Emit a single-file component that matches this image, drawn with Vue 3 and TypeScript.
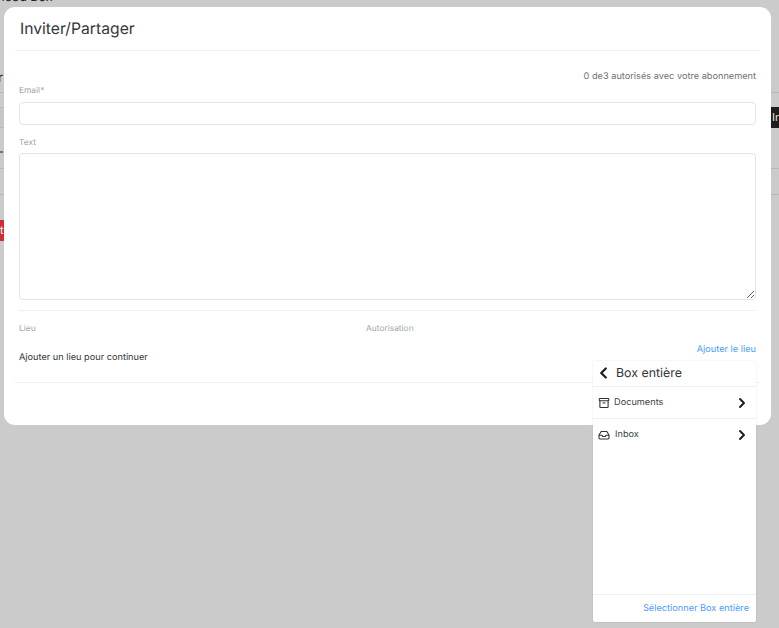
<script setup lang="ts">
const places = [
  { name: 'Documents', icon: 'archive' },
  { name: 'Inbox', icon: 'inbox' },
]
const rowHeights = [6, 14, 19, 40, 25]
</script>

<template>
  <div class="page">
    <div class="behind">
      <div class="behind-title">Advanced Box</div>
      <div class="behind-heading">r</div>
      <div
        v-for="(h, i) in rowHeights"
        :key="i"
        class="behind-row"
        :class="{ band: i === 2 }"
        :style="{ height: h + 'px' }"
      ></div>
      <span class="dot"></span>
      <span class="red">t</span>
      <span class="black">In</span>
    </div>

    <section class="modal">
      <header class="modal-head"><h1>Inviter/Partager</h1></header>
      <div class="modal-body">
        <p class="quota">0 de3 autorisés avec votre abonnement</p>
        <label class="lbl email-lbl">Email*</label>
        <input class="field" type="text" />
        <label class="lbl text-lbl">Text</label>
        <textarea class="area"></textarea>
        <div class="sep"></div>
        <div class="cols">
          <span class="lbl">Lieu</span>
          <span class="lbl">Autorisation</span>
        </div>
        <div class="place-row">
          <span class="hint">Ajouter un lieu pour continuer</span>
          <a class="link add">Ajouter le lieu</a>
        </div>
      </div>
      <div class="foot-line"></div>
    </section>

    <aside class="menu">
      <div class="menu-head">
        <svg width="14" height="14" viewBox="0 0 14 14" fill="none" stroke="#1c1c1c" stroke-width="2.200" stroke-linecap="round" stroke-linejoin="round"><path d="M9.800 2.500 5.200 7l4.600 4.500" /></svg>
        <span>Box entière</span>
      </div>
      <div v-for="(p, i) in places" :key="p.name" class="menu-item" :class="{ last: i === places.length - 1 }">
        <svg v-if="p.icon === 'archive'" class="ico" width="12" height="12" viewBox="0 0 12 12" fill="none" stroke="#333" stroke-width="1.100"><rect x="1.300" y="1.500" width="9.400" height="2.300" rx="0.500" /><path d="M1.900 3.800v6.200a.5.500 0 0 0 .5.500h7.200a.5.500 0 0 0 .5-.5V3.800M4.500 6h3" /></svg>
        <svg v-else class="ico wide" width="12" height="12" viewBox="0 0 12 12" fill="none" stroke="#333" stroke-width="1.100" stroke-linejoin="round"><path d="M3.200 2.500h5.600L11 6v2.800a1.200 1.200 0 0 1-1.200 1.200H2.200A1.200 1.200 0 0 1 1 8.800V6z" /><path d="M1 6.200h3l.6 1.300h2.800L8 6.200h3" /></svg>
        <span class="item-name">{{ p.name }}</span>
        <svg class="chev" width="12" height="12" viewBox="0 0 12 12" fill="none" stroke="#1c1c1c" stroke-width="1.900" stroke-linecap="round" stroke-linejoin="round"><path d="M4 2l4 4-4 4" /></svg>
      </div>
      <div class="menu-space"></div>
      <div class="menu-foot"><a class="link">Sélectionner Box entière</a></div>
    </aside>
  </div>
</template>

<style scoped>
.page {
  position: relative;
  width: 779px;
  height: 628px;
  overflow: hidden;
  background: #cbcbcb;
  font-family: Inter, "Liberation Sans", sans-serif;
  text-rendering: geometricPrecision;
}
.behind {
  display: flex;
  flex-direction: column;
  height: 100%;
  color: #222;
}
.behind-title {
  margin-top: -10px;
  margin-left: -33px;
  height: 16px;
  font-size: 12.500px;
  line-height: 16px;
  white-space: nowrap;
}
.behind-heading {
  margin-top: 64px;
  margin-left: -2px;
  height: 16px;
  font-size: 13px;
  line-height: 16px;
  color: #3a2410;
}
.behind-row { border-bottom: 1px solid #b8b8b8; }
.band { background: #c6c6c6; }
.dot {
  position: absolute;
  left: 0;
  top: 151px;
  width: 3px;
  height: 2px;
  background: #777;
}
.red {
  position: absolute;
  left: 0;
  top: 220px;
  width: 4px;
  height: 21px;
  background: #cc2f33;
  color: #fff;
  font-size: 11px;
  line-height: 21px;
  overflow: hidden;
}
.black {
  position: absolute;
  left: 771px;
  top: 107px;
  width: 8px;
  height: 21px;
  background: #1d1d1d;
  color: #f0e8d0;
  font-size: 11px;
  line-height: 21px;
  padding-left: 1px;
  box-sizing: border-box;
  overflow: hidden;
}
.modal {
  position: absolute;
  left: 4px;
  top: 7px;
  width: 767px;
  height: 418px;
  background: #fff;
  border-radius: 11px;
  box-sizing: border-box;
}
.modal-head {
  height: 44px;
  margin: 0 11px;
  border-bottom: 1px solid #eeeff1;
  box-sizing: border-box;
}
.modal-head h1 {
  margin: 0;
  padding: 11px 0 0 5px;
  font-size: 15.700px;
  line-height: 21px;
  font-weight: 400;
  color: #33363a;
}
.modal-body {
  padding: 0 15px;
  display: flex;
  flex-direction: column;
}
.quota {
  margin: 19px 0 0;
  text-align: right;
  font-size: 9.200px;
  line-height: 13px;
  color: #6d7278;
}
.lbl {
  font-size: 8.400px;
  line-height: 12px;
  color: #a0a5ab;
}
.email-lbl { margin-top: 2px; }
.text-lbl { margin-top: 12px; }
.field, .area {
  display: block;
  width: 100%;
  box-sizing: border-box;
  border: 1px solid #e2e4e8;
  border-radius: 4px;
  background: #fff;
  outline: none;
}
.field { height: 23px; margin: 5px 0 0; }
.area { height: 147px; margin: 4px 0 0; resize: vertical; }
.sep {
  margin-top: 10px;
  border-top: 1px solid #eeeff1;
}
.cols {
  margin-top: 12px;
  display: grid;
  grid-template-columns: 347px 1fr;
}
.place-row {
  display: flex;
  justify-content: space-between;
  align-items: flex-start;
  margin-top: 3px;
  height: 33px;
}
.hint {
  margin-top: 13px;
  font-size: 9.200px;
  line-height: 13px;
  color: #33363a;
}
.link {
  font-size: 9.200px;
  line-height: 13px;
  color: #4a9dff;
}
.add { margin-top: 5px; }
.foot-line {
  margin: 11px 11px 0;
  border-top: 1px solid #f0f1f2;
}
.menu {
  position: absolute;
  left: 593px;
  top: 361px;
  width: 163px;
  height: 261px;
  background: #fff;
  box-shadow: 0 0 2px rgba(0, 0, 0, 0.12);
  border-radius: 2px;
  display: flex;
  flex-direction: column;
}
.menu-head {
  height: 24px;
  padding-bottom: 1px;
  display: flex;
  align-items: center;
  gap: 6px;
  padding-left: 3px;
  border-bottom: 1px solid #eeeff1;
  font-size: 12.400px;
  line-height: 22px;
  color: #33363a;
}
.menu-item {
  height: 31px;
  display: flex;
  align-items: center;
  padding: 0 8px 0 5px;
  border-bottom: 1px solid #eeeff1;
  font-size: 9.200px;
  color: #3c3f44;
}
.menu-item.last { border-bottom: none; }
.ico { margin-right: 4px; }
.ico.wide { margin-right: 5px; }
.item-name { flex: 1; }
.menu-space { flex: 1; }
.menu-foot {
  height: 27px;
  border-top: 1px solid #eeeff1;
  display: flex;
  align-items: center;
  justify-content: flex-end;
  padding-right: 7px;
}
</style>
